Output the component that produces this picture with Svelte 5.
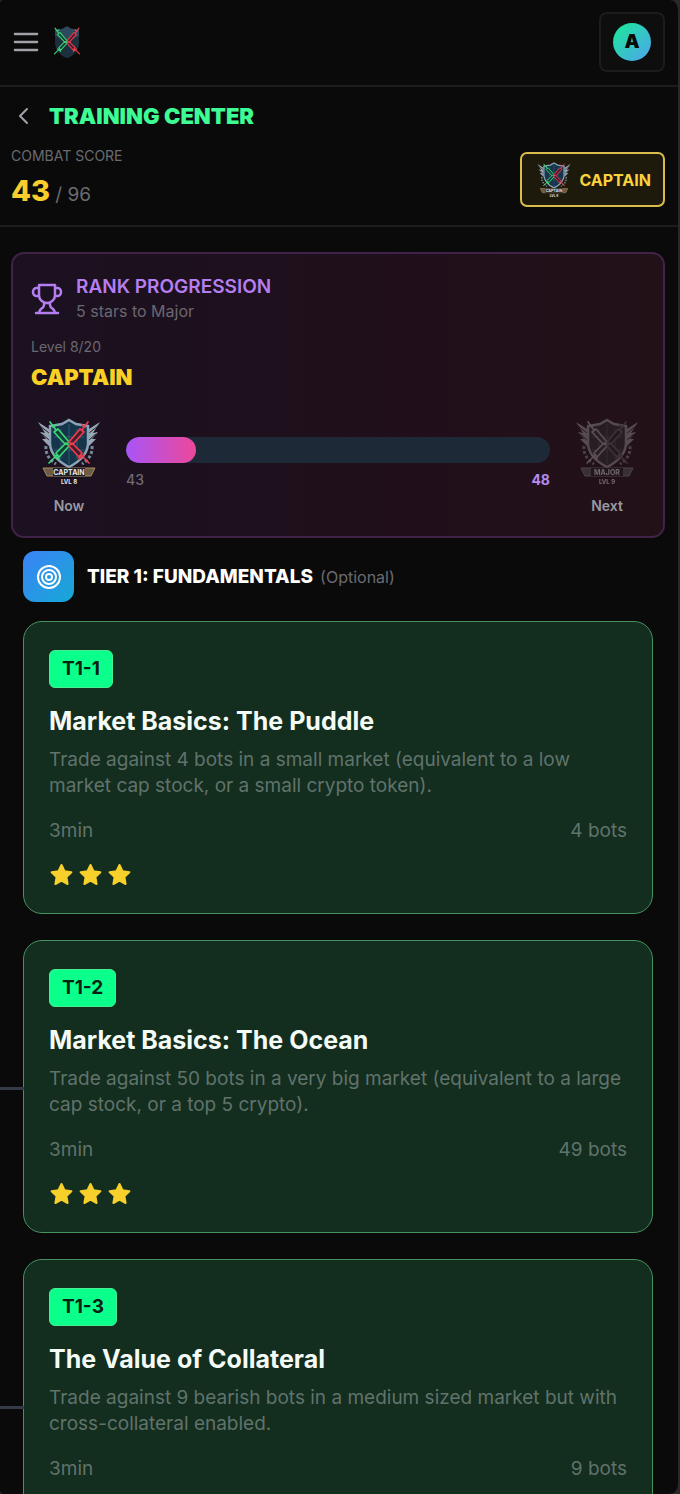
<script lang="ts">
	const rank = {
		name: 'CAPTAIN',
		next: 'Major',
		level: 8,
		maxLevel: 20,
		score: 43,
		maxScore: 96,
		target: 48,
		percent: 16.5
	};

	const missions = [
		{
			code: 'T1-1',
			title: 'Market Basics: The Puddle',
			description:
				'Trade against 4 bots in a small market (equivalent to a low market cap stock, or a small crypto token).',
			duration: '3min',
			bots: 4,
			stars: 3
		},
		{
			code: 'T1-2',
			title: 'Market Basics: The Ocean',
			description:
				'Trade against 50 bots in a very big market (equivalent to a large cap stock, or a top 5 crypto).',
			duration: '3min',
			bots: 49,
			stars: 3
		},
		{
			code: 'T1-3',
			title: 'The Value of Collateral',
			description:
				'Trade against 9 bearish bots in a medium sized market but with cross-collateral enabled.',
			duration: '3min',
			bots: 9,
			stars: 3
		}
	];
</script>

{#snippet swords()}
	<g fill="#123f35" stroke="#3ad678" stroke-width="1.7" stroke-linecap="round" stroke-linejoin="round">
		<path d="M32 25 21 12 17 15 29 28ZM19 13 13 5M16 10l3-2" />
		<path d="M29 26 19 36 22 40 32 29ZM20 38 12 46M17 38l5 4" />
	</g>
	<g fill="#4a1c2b" stroke="#ee3d4f" stroke-width="1.700" stroke-linecap="round" stroke-linejoin="round">
		<path d="M32 25 43 12 47 15 35 28ZM45 13 51 5M48 10l-3-2" />
		<path d="M35 26 45 36 42 40 32 29ZM44 38 52 46M47 38l-5 4" />
	</g>
{/snippet}

{#snippet badge(name: string, level: string)}
	<path d="M1 5 12 12V29L5 22 9 22 3 15 8 16Z" fill="#97a7b6" />
	<path d="M63 5 52 12V29L59 22 55 22 61 15 56 16Z" fill="#97a7b6" />
	<path d="m3 9 9 7M5 17l7 6M61 9l-9 7M59 17l-7 6" stroke="#24202d" stroke-width="1" />
	<path d="M9 29Q8 40 19 47M55 29q1 11-10 18" fill="none" stroke="#77899a" stroke-width="3" stroke-dasharray="3 2" />
	<path d="M32 3 39 7 51 9V27Q50 41 32 50Q14 41 13 27V9L25 7Z" fill="#17354a" stroke="#8ba4b8" stroke-width="2.5" />
	<path d="M24 12V42M32 7V47M40 12V42M17 20H47M17 33H47" stroke="#3f7188" stroke-width="1" opacity="0.6" />
	{@render swords()}
	<path d="M6 51H58L54 59H10Z" fill="#6c5c45" stroke="#a48b61" stroke-width="1" />
	<path d="M16 51H48V59H16Z" fill="#202024" />
	<text x="32" y="58" text-anchor="middle">{name}</text>
	<text x="32" y="67" text-anchor="middle" class="badge-level">{level}</text>
{/snippet}

<svelte:head>
	<title>Training Center</title>
</svelte:head>

<div class="shell">
	<header class="topbar">
		<div class="brand">
			<button class="icon-button" aria-label="Open menu">
				<svg width="26" height="26" viewBox="0 0 26 26" stroke="currentColor" stroke-width="2.5" stroke-linecap="round">
					<path d="M2 5H24M2 13H24M2 21H24" />
				</svg>
			</button>
			<a href="/" aria-label="Home">
				<svg width="28" height="34" viewBox="10 0 44 54">
					<path d="M32 2 39 6 51 7V30Q50 45 32 53Q14 45 13 30V7L25 6Z" fill="#1c2f3c" />
					<path d="M32 2 39 6 51 7V17L32 27 13 17V7L25 6Z" fill="#35566a" opacity="0.7" />
					{@render swords()}
				</svg>
			</a>
		</div>
		<button class="account" aria-label="Account"><span>A</span></button>
	</header>

	<section class="score-bar">
		<div>
			<div class="title-row">
				<button class="icon-button" aria-label="Go back">
					<svg width="26" height="26" viewBox="0 0 26 26" fill="none" stroke="currentColor" stroke-width="2" stroke-linecap="round" stroke-linejoin="round">
						<path d="m16 6-7 7 7 7" />
					</svg>
				</button>
				<h1>TRAINING CENTER</h1>
			</div>
			<p class="label">COMBAT SCORE</p>
			<p class="score"><strong>{rank.score}</strong> <span>/ {rank.maxScore}</span></p>
		</div>
		<button class="rank-button">
			<svg class="badge small" viewBox="0 0 64 70">{@render badge('CAPTAIN', 'LVL 8')}</svg>
			{rank.name}
		</button>
	</section>

	<main>
		<section class="progression">
			<div class="progression-head">
				<svg width="32" height="32" viewBox="0 0 32 32" fill="none" stroke="currentColor" stroke-width="2.5" stroke-linecap="round" stroke-linejoin="round">
					<path d="M8 2H24V12A8 8 0 0 1 8 12ZM8 5H5A3 4 0 0 0 5 13H8M24 5H27A3 4 0 0 1 27 13H24M13 20V22Q13 24 10 26 8 28 8 30M19 20V22Q19 24 22 26 24 28 24 30M5 30H27" />
				</svg>
				<div>
					<h2>RANK PROGRESSION</h2>
					<p>{rank.target - rank.score} stars to {rank.next}</p>
				</div>
			</div>
			<p class="level">Level {rank.level}/{rank.maxLevel}</p>
			<p class="rank-name">{rank.name}</p>

			<div class="track-row">
				<div class="stage">
					<svg class="badge" viewBox="0 0 64 70">{@render badge('CAPTAIN', 'LVL 8')}</svg>
					<span>Now</span>
				</div>
				<div class="track">
					<div class="bar"><div class="fill" style="width: {rank.percent}%"></div></div>
					<div class="ends">
						<span>{rank.score}</span>
						<strong>{rank.target}</strong>
					</div>
				</div>
				<div class="stage">
					<svg class="badge locked" viewBox="0 0 64 70">{@render badge('MAJOR', 'LVL 9')}</svg>
					<span>Next</span>
				</div>
			</div>
		</section>

		<section class="tier">
			<div class="tier-head">
				<div class="tier-icon">
					<svg width="26" height="26" viewBox="0 0 26 26" fill="none" stroke="currentColor" stroke-width="2">
						<circle cx="13" cy="13" r="11" />
						<circle cx="13" cy="13" r="7" />
						<circle cx="13" cy="13" r="3" />
					</svg>
				</div>
				<h2>TIER 1: FUNDAMENTALS <small>(Optional)</small></h2>
			</div>

			<div class="missions">
				{#each missions as mission}
					<article class="mission">
						<span class="code">{mission.code}</span>
						<h3>{mission.title}</h3>
						<p>{mission.description}</p>
						<div class="meta">
							<span>{mission.duration}</span>
							<span>{mission.bots} bots</span>
						</div>
						<div class="stars" role="img" aria-label="{mission.stars} stars">
							{#each { length: mission.stars } as _}
								<svg width="24" height="24" viewBox="0 0 24 24">
									<path d="m12.500 2 3 6.300 6.900.9-5 4.800 1.200 7-6.100-3.300L6.400 21l1.200-7-5-4.800 6.900-.9Z" />
								</svg>
							{/each}
						</div>
					</article>
				{/each}
			</div>
		</section>
	</main>
</div>

<style>
	:global(body) {
		background: #292929;
	}

	.shell {
		box-sizing: border-box;
		display: flex;
		flex-direction: column;
		height: 100vh;
		overflow: hidden;
		border-right: 2px solid #292929;
		border-radius: 4px 10px 10px 4px;
		background: #0a0a0a;
		color: #fff;
		font-family: Inter, sans-serif;
	}

	h1,
	h2,
	h3,
	p {
		margin: 0;
	}

	button {
		font-family: inherit;
		cursor: pointer;
	}

	svg {
		display: block;
		flex: none;
	}

	.topbar {
		display: flex;
		justify-content: space-between;
		align-items: center;
		padding: 12px 13px 13px;
		border-bottom: 2px solid #1d1d1d;
	}

	.brand {
		display: flex;
		align-items: center;
		gap: 14px;
	}

	.icon-button {
		padding: 0;
		border: 0;
		background: none;
		color: #a1a1aa;
	}

	.account {
		display: grid;
		place-items: center;
		width: 66px;
		height: 60px;
		border: 2px solid #1c1c1c;
		border-radius: 8px;
		background: #0e0e0e;
	}

	.account span {
		width: 38px;
		border-radius: 50%;
		background: linear-gradient(135deg, #19eb97, #4fa3ee);
		color: #0a0a0a;
		font-size: 19px;
		font-weight: 900;
		line-height: 38px;
	}

	.score-bar {
		display: flex;
		justify-content: space-between;
		align-items: flex-end;
		padding: 13px 13px 18px 11px;
		border-bottom: 2px solid #1d1d1d;
	}

	.title-row {
		display: flex;
		align-items: center;
		gap: 12px;
	}

	h1 {
		color: #3dfb95;
		font-size: 22px;
		font-weight: 900;
		line-height: 32px;
	}

	.label {
		margin-top: 14px;
		color: #6b6b71;
		font-size: 14px;
		line-height: 20px;
	}

	.score {
		margin-top: 9px;
		color: #6b6b71;
		font-size: 19px;
		line-height: 20px;
	}

	.score strong {
		color: #fbcd2c;
		font-size: 29px;
		font-weight: 800;
		line-height: 32px;
	}

	.rank-button {
		display: flex;
		align-items: center;
		gap: 8px;
		height: 55px;
		padding: 0 12px 0 15px;
		border: 2px solid #d8bd4b;
		border-radius: 7px;
		background: #1d190b;
		color: #fad33c;
		font-size: 16px;
		font-weight: 700;
	}

	main {
		flex: 1;
		min-height: 0;
		overflow-y: auto;
		scrollbar-width: none;
		padding: 25px 13px 0 11px;
	}

	.progression {
		padding: 20px 18px;
		border: 2px solid #412349;
		border-radius: 13px;
		background: linear-gradient(90deg, #1b1120, #200f1b 60%, #231118);
	}

	.progression-head {
		display: flex;
		align-items: center;
		gap: 13px;
		color: #b57ef0;
	}

	.progression-head h2 {
		font-size: 19px;
		font-weight: 600;
		line-height: 25px;
	}

	.progression-head p {
		color: #6b6771;
		font-size: 16px;
		line-height: 25px;
	}

	.level {
		margin-top: 13px;
		color: #6b6771;
		font-size: 14px;
		line-height: 20px;
	}

	.rank-name {
		color: #fad027;
		font-size: 22px;
		font-weight: 900;
		line-height: 40px;
	}

	.track-row {
		display: flex;
		gap: 19px;
		margin-top: 20px;
	}

	.stage {
		display: flex;
		flex-direction: column;
		align-items: center;
		gap: 9px;
		width: 76px;
		color: #9899a2;
		font-size: 14px;
		font-weight: 600;
		line-height: 20px;
	}

	.badge {
		width: 64px;
		height: 70px;
	}

	.badge.small {
		width: 34px;
		height: 38px;
	}

	.badge text {
		fill: #e5e7eb;
		font-size: 7px;
		font-weight: 700;
	}

	.badge .badge-level {
		font-size: 6px;
	}

	.locked {
		filter: grayscale(1);
		opacity: 0.4;
	}

	.track {
		flex: 1;
		padding-top: 20px;
	}

	.bar {
		height: 26px;
		overflow: hidden;
		border-radius: 13px;
		background: #1e2937;
	}

	.fill {
		height: 100%;
		border-radius: 13px;
		background: linear-gradient(90deg, #a855f7, #ec4899);
	}

	.ends {
		display: flex;
		justify-content: space-between;
		margin-top: 7px;
		color: #6f6b75;
		font-size: 14px;
		font-weight: 500;
		line-height: 20px;
	}

	.ends strong {
		color: #b68bf0;
		font-weight: 700;
	}

	.tier {
		padding: 13px 12px 26px;
	}

	.tier-head {
		display: flex;
		align-items: center;
		gap: 13px;
	}

	.tier-icon {
		display: grid;
		place-items: center;
		width: 51px;
		height: 51px;
		border-radius: 12px;
		background: linear-gradient(135deg, #3b82f6, #16a9d5);
	}

	.tier-head h2 {
		font-size: 19px;
		font-weight: 800;
		line-height: 26px;
	}

	.tier-head small {
		margin-left: 3px;
		color: #6b6b71;
		font-size: 16px;
		font-weight: 400;
	}

	.missions {
		display: grid;
		gap: 26px;
		margin-top: 19px;
	}

	.mission {
		position: relative;
		padding: 28px 25px 26px;
		border: 1px solid #479160;
		border-radius: 19px;
		background: #132d1f;
	}

	/* path line leading into every mission after the first */
	.mission + .mission::before {
		content: '';
		position: absolute;
		top: 50%;
		right: 100%;
		width: 26px;
		height: 3px;
		background: #353b48;
	}

	.code {
		display: inline-block;
		padding: 0 12px;
		border: 1px solid #46ee91;
		border-radius: 6px;
		background: #0aff8b;
		color: #0a2015;
		font-size: 19px;
		font-weight: 700;
		line-height: 36px;
		vertical-align: top;
	}

	h3 {
		margin-top: 17px;
		color: #f4fbf6;
		font-size: 25px;
		font-weight: 700;
		line-height: 32px;
	}

	.mission p {
		margin-top: 10px;
		color: #60736b;
		font-size: 19px;
		line-height: 26px;
	}

	.meta {
		display: flex;
		justify-content: space-between;
		margin-top: 19px;
		color: #60736b;
		font-size: 19px;
		line-height: 26px;
	}

	.stars {
		display: flex;
		gap: 5px;
		margin-top: 19px;
	}

	.stars path {
		fill: #f7d02c;
		stroke: #f7d02c;
		stroke-width: 2;
		stroke-linejoin: round;
	}
</style>
